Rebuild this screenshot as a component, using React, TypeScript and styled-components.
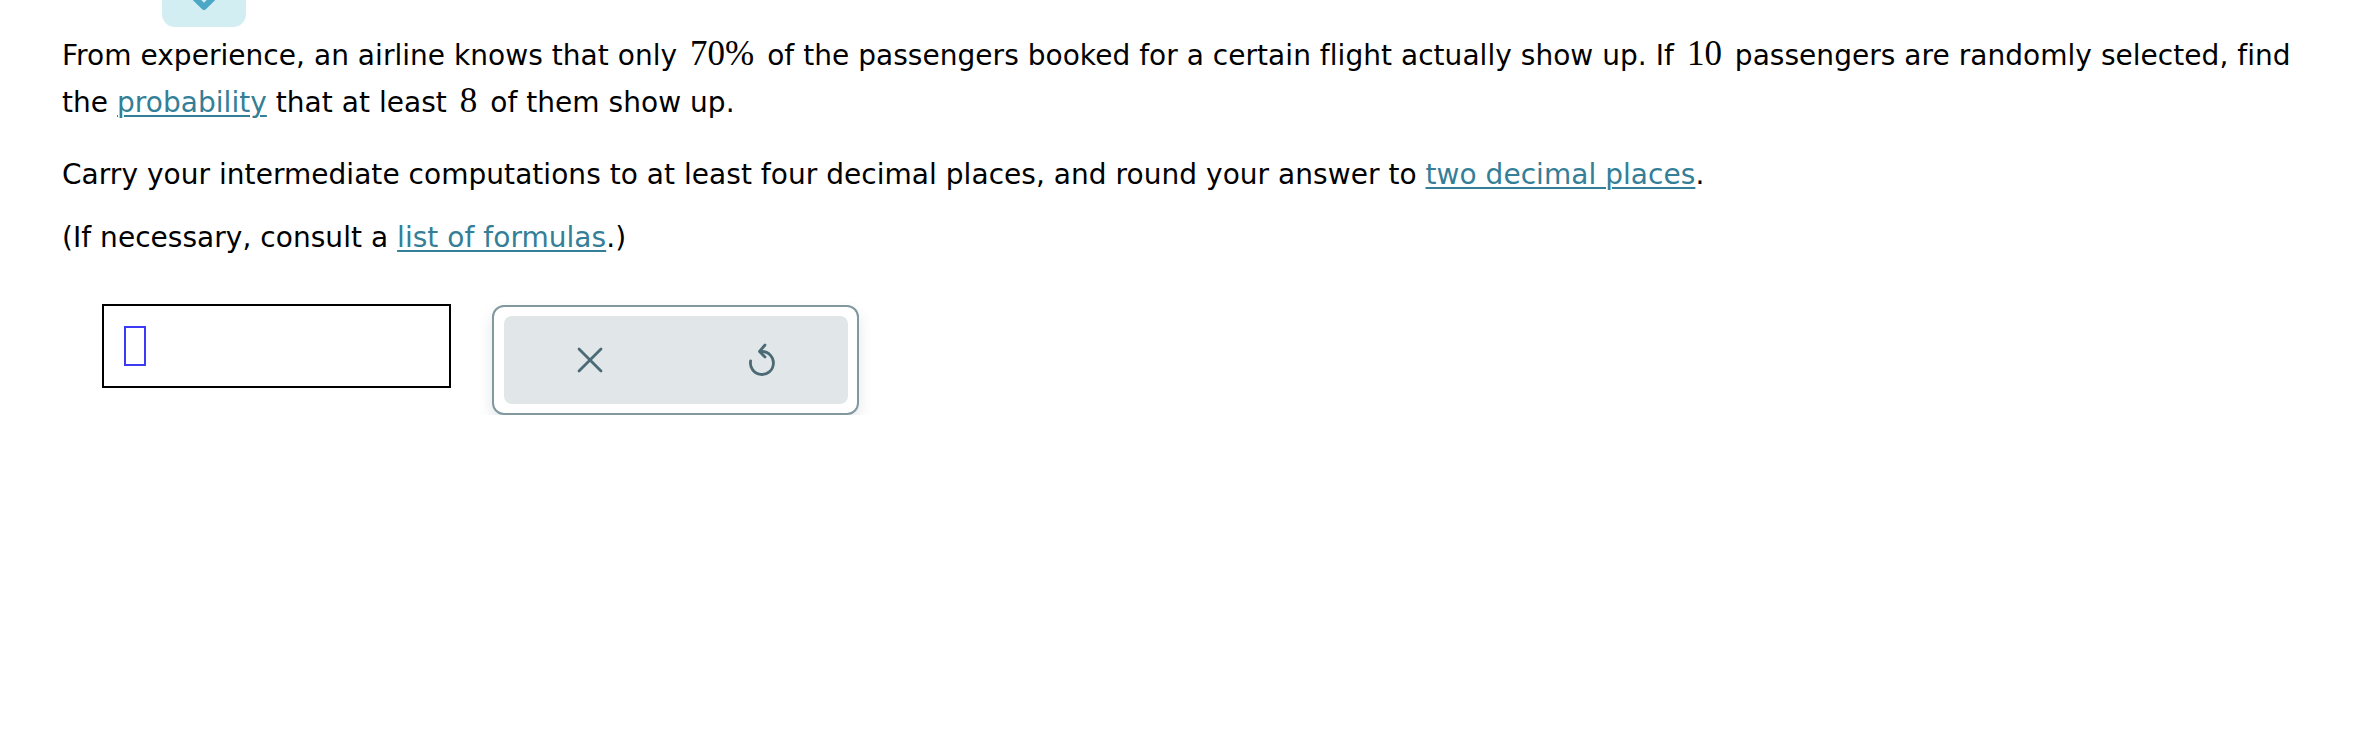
import React from "react";
import styled, { createGlobalStyle } from "styled-components";

const GlobalStyle = createGlobalStyle`
  html, body {
    margin: 0;
    padding: 0;
    background: #ffffff;
  }
  body {
    font-family: Verdana, "DejaVu Sans", sans-serif;
    color: #000000;
  }
`;

const Page = styled.div`
  padding: 0 0 0 62px;
`;

const TabRow = styled.div`
  display: flex;
  padding-left: 100px;
`;

const CollapseTab = styled.div`
  width: 84px;
  height: 27px;
  background: #d3eef3;
  border-radius: 0 0 13px 13px;
  display: flex;
  justify-content: center;
  align-items: flex-start;
  overflow: hidden;
`;

const Question = styled.div`
  width: 2255px;
  margin-top: 4.5px;
  font-size: 28px;
  line-height: 47.5px;
  letter-spacing: 0.04px;
  font-variant-ligatures: none;
`;

const Para = styled.p<{ $gap: number }>`
  margin: 0 0 ${(p) => p.$gap}px 0;
`;

const MathNum = styled.span`
  font-family: "Liberation Serif", "Times New Roman", serif;
  font-size: 35px;
  line-height: 44px;
  letter-spacing: 0;
  margin: 0 4px;
`;

const Link = styled.a`
  color: #347f97;
  text-decoration: underline;
  text-underline-offset: 3px;
  text-decoration-thickness: 2px;
  cursor: pointer;
`;

const AnswerRow = styled.div`
  display: flex;
  align-items: flex-start;
  gap: 41px;
  margin-top: 42px;
  padding-left: 40px;
`;

const InputBox = styled.div`
  box-sizing: border-box;
  width: 349px;
  height: 84px;
  border: 2px solid #000000;
  display: flex;
  align-items: center;
  padding-left: 20px;
`;

const Cursor = styled.div`
  box-sizing: border-box;
  width: 22px;
  height: 40px;
  border: 2px solid #3b3bf6;
`;

const ButtonGroup = styled.div`
  box-sizing: border-box;
  width: 367px;
  height: 110px;
  margin-top: 1px;
  border: 2px solid #81989f;
  border-radius: 12px;
  padding: 9px 9px 9px 10px;
  background: #ffffff;
  box-shadow: 0 7px 14px rgba(60, 80, 90, 0.14);
  display: flex;
`;

const ButtonTray = styled.div`
  flex: 1;
  display: flex;
  background: #e1e6e9;
  border-radius: 8px;
`;

const ToolButton = styled.button`
  flex: 1;
  border: none;
  background: transparent;
  display: flex;
  align-items: center;
  justify-content: center;
  padding: 0;
  cursor: pointer;
  color: #4b6a75;
`;

const ChevronIcon = () => (
  <svg width="40" height="16" viewBox="0 0 40 16">
    <polyline
      points="7,-6 20,7 33,-6"
      fill="none"
      stroke="#4aa7c5"
      strokeWidth="6"
      strokeLinecap="round"
      strokeLinejoin="round"
    />
  </svg>
);

const CloseIcon = () => (
  <svg width="26" height="26" viewBox="0 0 26 26">
    <path
      d="M2 2 L24 24 M24 2 L2 24"
      stroke="currentColor"
      strokeWidth="2.8"
      strokeLinecap="round"
      fill="none"
    />
  </svg>
);

const UndoIcon = () => (
  <svg width="30" height="36" viewBox="0 0 30 36">
    <path
      d="M15 9.5 A11.5 11.5 0 1 1 3.6 19"
      stroke="currentColor"
      strokeWidth="2.8"
      strokeLinecap="round"
      fill="none"
    />
    <path
      d="M18 3 L12.5 9.5 L18 15"
      stroke="currentColor"
      strokeWidth="2.8"
      strokeLinecap="round"
      strokeLinejoin="round"
      fill="none"
    />
  </svg>
);

export default function App() {
  return (
    <>
      <GlobalStyle />
      <Page>
        <TabRow>
          <CollapseTab>
            <ChevronIcon />
          </CollapseTab>
        </TabRow>
        <Question>
          <Para $gap={24}>
            From experience, an airline knows that only <MathNum>70%</MathNum> of the
            passengers booked for a certain flight actually show up. If{" "}
            <MathNum>10</MathNum> passengers are randomly selected, find the{" "}
            <Link>probability</Link> that at least <MathNum>8</MathNum> of them show up.
          </Para>
          <Para $gap={16}>
            Carry your intermediate computations to at least four decimal places, and
            round your answer to <Link>two decimal places</Link>.
          </Para>
          <Para $gap={0}>
            (If necessary, consult a <Link>list of formulas</Link>.)
          </Para>
        </Question>
        <AnswerRow>
          <InputBox>
            <Cursor />
          </InputBox>
          <ButtonGroup>
            <ButtonTray>
              <ToolButton aria-label="Clear">
                <CloseIcon />
              </ToolButton>
              <ToolButton aria-label="Undo">
                <UndoIcon />
              </ToolButton>
            </ButtonTray>
          </ButtonGroup>
        </AnswerRow>
      </Page>
    </>
  );
}
